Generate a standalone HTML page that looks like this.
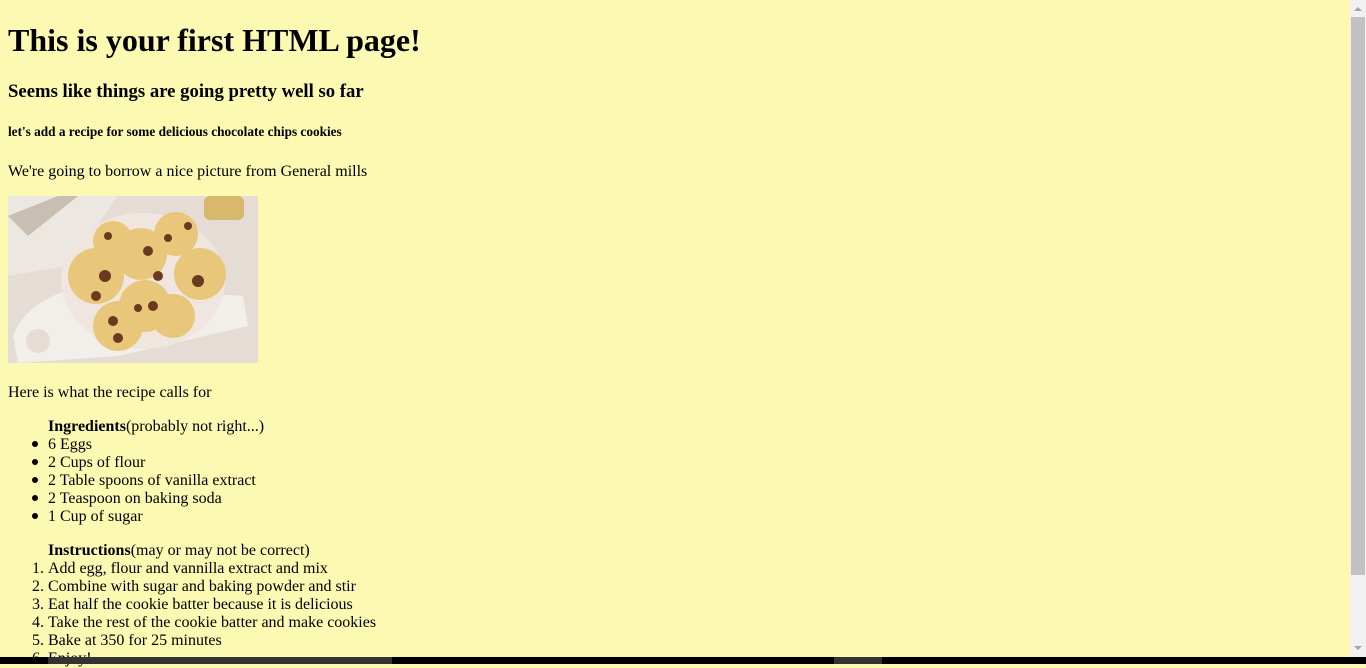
<!DOCTYPE html>
<html><head><style>
html,body{margin:0;padding:0;}
body{width:1366px;height:664px;background:#fcf9b3;font-family:"Liberation Serif",serif;color:#000;position:relative;overflow:hidden;font-size:16px;}
.a{position:absolute;white-space:nowrap;line-height:18px;}
.b{position:absolute;left:32px;width:6px;height:6px;border-radius:50%;background:#000;}
</style></head><body>
<div class="a" style="left:8px;top:22px;font-size:32px;font-weight:bold;line-height:37px;">This is your first HTML page!</div>
<div class="a" style="left:8px;top:81px;font-size:18.72px;font-weight:bold;line-height:22px;">Seems like things are going pretty well so far</div>
<div class="a" style="left:8px;top:124px;font-size:13.28px;font-weight:bold;line-height:16px;">let's add a recipe for some delicious chocolate chips cookies</div>
<div class="a" style="left:8px;top:163px;">We're going to borrow a nice picture from General mills</div>
<svg style="position:absolute;left:8px;top:196px" width="250" height="167" viewBox="0 0 250 167">
<rect width="250" height="167" fill="#e6dcd6"/>
<path d="M0 0 L110 0 L60 70 L0 80Z" fill="#ece7e0"/>
<path d="M0 20 L50 0 L70 0 L20 40Z" fill="#c9beb2"/>
<rect x="196" y="0" width="40" height="24" rx="6" fill="#d8b86a"/>
<path d="M5 140 Q20 100 80 90 L235 100 L240 130 L110 160 L10 167Z" fill="#f2eeea"/>
<circle cx="30" cy="145" r="12" fill="#e6dcd6"/>
<ellipse cx="135" cy="85" rx="82" ry="68" fill="#efe7df"/>
<g fill="#e9c77a">
<circle cx="105" cy="45" r="20"/><circle cx="168" cy="38" r="22"/><circle cx="133" cy="58" r="26"/>
<circle cx="88" cy="80" r="28"/><circle cx="192" cy="78" r="26"/><circle cx="137" cy="110" r="26"/>
<circle cx="110" cy="130" r="25"/><circle cx="165" cy="120" r="22"/>
</g>
<g fill="#6b3a1e">
<circle cx="100" cy="40" r="4"/><circle cx="140" cy="55" r="5"/><circle cx="150" cy="80" r="5"/>
<circle cx="97" cy="80" r="6"/><circle cx="190" cy="85" r="6"/><circle cx="180" cy="30" r="4"/>
<circle cx="145" cy="110" r="5"/><circle cx="130" cy="112" r="4"/><circle cx="105" cy="125" r="5"/>
<circle cx="110" cy="142" r="5"/><circle cx="88" cy="100" r="5"/><circle cx="160" cy="42" r="4"/>
</g>
</svg>
<div class="a" style="left:8px;top:384px;">Here is what the recipe calls for</div>
<div class="a" style="left:48px;top:418px;"><b>Ingredients</b>(probably not right...)</div>
<div class="b" style="top:441px"></div><div class="a" style="left:48px;top:436px;">6 Eggs</div>
<div class="b" style="top:459px"></div><div class="a" style="left:48px;top:454px;">2 Cups of flour</div>
<div class="b" style="top:477px"></div><div class="a" style="left:48px;top:472px;">2 Table spoons of vanilla extract</div>
<div class="b" style="top:495px"></div><div class="a" style="left:48px;top:490px;">2 Teaspoon on baking soda</div>
<div class="b" style="top:513px"></div><div class="a" style="left:48px;top:508px;">1 Cup of sugar</div>
<div class="a" style="left:48px;top:542px;"><b>Instructions</b>(may or may not be correct)</div>
<div class="a" style="left:32px;top:560px;">1.</div><div class="a" style="left:48px;top:560px;">Add egg, flour and vannilla extract and mix</div>
<div class="a" style="left:32px;top:578px;">2.</div><div class="a" style="left:48px;top:578px;">Combine with sugar and baking powder and stir</div>
<div class="a" style="left:32px;top:596px;">3.</div><div class="a" style="left:48px;top:596px;">Eat half the cookie batter because it is delicious</div>
<div class="a" style="left:32px;top:614px;">4.</div><div class="a" style="left:48px;top:614px;">Take the rest of the cookie batter and make cookies</div>
<div class="a" style="left:32px;top:632px;">5.</div><div class="a" style="left:48px;top:632px;">Bake at 350 for 25 minutes</div>
<div class="a" style="left:32px;top:650px;">6.</div><div class="a" style="left:48px;top:650px;">Enjoy!</div>
<div style="position:absolute;left:1350px;top:0;width:16px;height:657px;background:#f1f1f1;"></div>
<div style="position:absolute;left:1351px;top:17px;width:14px;height:558px;background:#c1c1c1;"></div>
<div style="position:absolute;left:1354px;top:7px;width:0;height:0;border-left:4px solid transparent;border-right:4px solid transparent;border-bottom:4px solid #a3a3a3;"></div>
<div style="position:absolute;left:1354px;top:646px;width:0;height:0;border-left:4px solid transparent;border-right:4px solid transparent;border-top:4px solid #a3a3a3;"></div>
<div style="position:absolute;left:0;top:657px;width:1366px;height:7px;background:#000;"></div>
<div style="position:absolute;left:48px;top:657px;width:344px;height:7px;background:#333;"></div>
<div style="position:absolute;left:834px;top:657px;width:48px;height:7px;background:#333;"></div>
</body></html>
